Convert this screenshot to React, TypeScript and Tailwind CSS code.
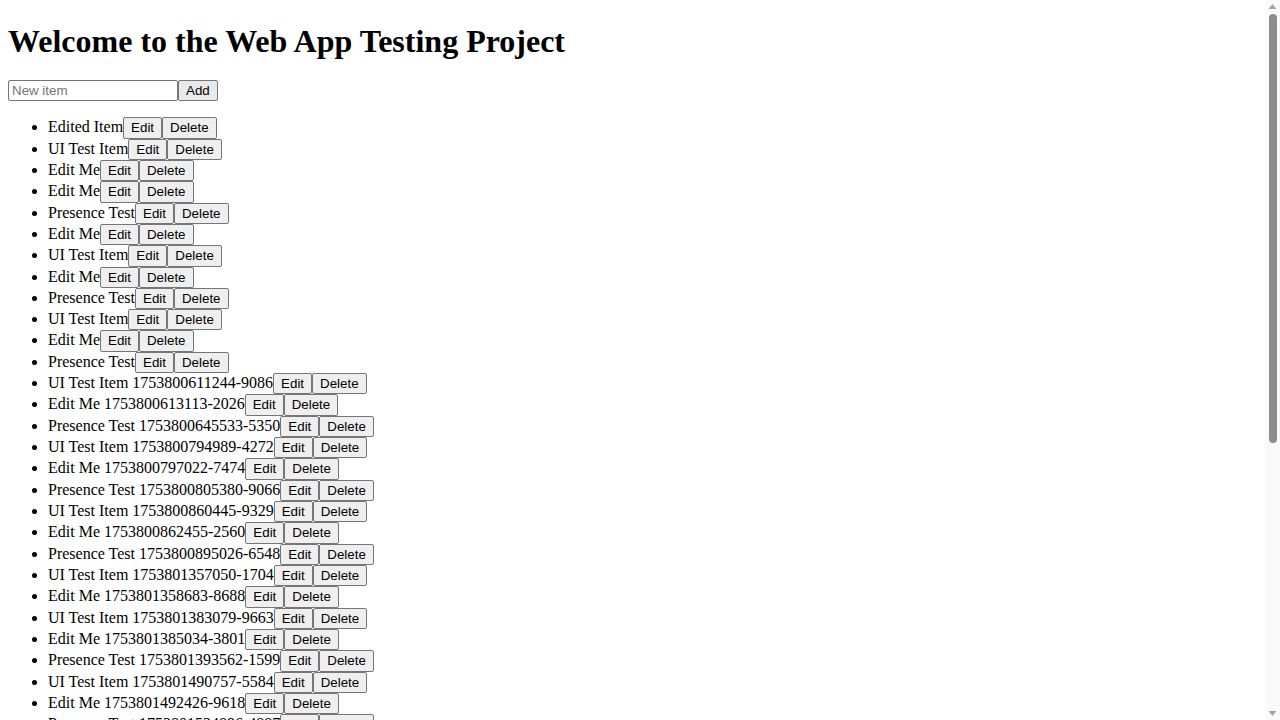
import { useState } from "react";

const initialItems = [
  "Edited Item",
  "UI Test Item",
  "Edit Me",
  "Edit Me",
  "Presence Test",
  "Edit Me",
  "UI Test Item",
  "Edit Me",
  "Presence Test",
  "UI Test Item",
  "Edit Me",
  "Presence Test",
  "UI Test Item 1753800611244-9086",
  "Edit Me 1753800613113-2026",
  "Presence Test 1753800645533-5350",
  "UI Test Item 1753800794989-4272",
  "Edit Me 1753800797022-7474",
  "Presence Test 1753800805380-9066",
  "UI Test Item 1753800860445-9329",
  "Edit Me 1753800862455-2560",
  "Presence Test 1753800895026-6548",
  "UI Test Item 1753801357050-1704",
  "Edit Me 1753801358683-8688",
  "UI Test Item 1753801383079-9663",
  "Edit Me 1753801385034-3801",
  "Presence Test 1753801393562-1599",
  "UI Test Item 1753801490757-5584",
  "Edit Me 1753801492426-9618",
  "Presence Test 1753801524896-4887",
  "UI Test Item 1753801612304-2215",
  "Edit Me 1753801614087-6903",
  "Presence Test 1753801648812-3376",
  "UI Test Item 1753801735520-8142",
  "Edit Me 1753801737291-1058",
  "Presence Test 1753801770455-7731",
  "UI Test Item 1753801902168-4490",
  "Edit Me 1753801903994-2867",
  "Presence Test 1753801939710-5023",
  "UI Test Item 1753802051873-6619",
  "Edit Me 1753802053640-9184",
  "Presence Test 1753802087212-3342",
  "UI Test Item 1753802210590-7805",
  "Edit Me 1753802212371-4158",
  "Presence Test 1753802246028-8826",
  "UI Test Item 1753802398443-1397",
  "Edit Me 1753802400215-6570",
  "Presence Test 1753802433867-2941",
  "UI Test Item 1753802519064-7312",
];

const btn =
  "inline-block align-baseline border border-[#767676] rounded-[2px] px-[7px] py-[2px] text-[13.333px] leading-[15.333px] font-['Liberation_Sans',Arial,sans-serif] text-black";

// the browser's classic scrollbar, as it shows in the screenshot
function FakeScrollbar() {
  return (
    <div className="fixed top-0 right-0 w-[15px] h-screen bg-[#fafafa] flex flex-col items-center pointer-events-none">
      <svg width="9" height="7" viewBox="0 0 9 7" className="mt-[3px] shrink-0">
        <path d="M4.5 1 L8.5 6 L0.5 6 Z" fill="#a3a3a3" />
      </svg>
      <div className="mt-[4px] w-[8px] h-[429px] rounded-full bg-[#8c8c8c]" />
      <div className="flex-1" />
      <svg width="9" height="7" viewBox="0 0 9 7" className="mb-[3px] shrink-0">
        <path d="M0.5 1 L8.5 1 L4.5 6 Z" fill="#a3a3a3" />
      </svg>
    </div>
  );
}

export default function App() {
  const [items, setItems] = useState(initialItems);
  const [newItem, setNewItem] = useState("");

  const addItem = () => {
    if (!newItem.trim()) return;
    setItems([...items, newItem]);
    setNewItem("");
  };

  return (
    <div className="h-screen overflow-y-scroll bg-white text-black font-['Liberation_Serif','Times_New_Roman',serif] text-[16px] leading-[normal]">
      <div className="px-2 pb-4 pt-px -mt-px">
        <h1 className="text-[32px] font-bold mt-[23.44px] mb-[19.44px]">Welcome to the Web App Testing Project</h1>
        <div>
          <input
            type="text"
            placeholder="New item"
            value={newItem}
            onChange={e => setNewItem(e.target.value)}
            className="inline-block align-baseline w-[170px] border border-[#767676] rounded-[2px] px-[3px] py-[2px] text-[13.333px] leading-[15.333px] font-['Liberation_Sans',Arial,sans-serif] placeholder:text-[#757575] outline-none"
          />
          <button onClick={addItem} className={`${btn} bg-[#e9e9e9]`}>Add</button>
        </div>
        <ul className="list-disc pl-10 mt-4">
          {items.map((item, i) => (
            <li key={i}>
              {item}
              <button className={`${btn} bg-[#efefef]`}>Edit</button>
              <button className={`${btn} bg-[#efefef]`} onClick={() => setItems(items.filter((_, j) => j !== i))}>
                Delete
              </button>
            </li>
          ))}
        </ul>
      </div>
      <FakeScrollbar />
    </div>
  );
}
